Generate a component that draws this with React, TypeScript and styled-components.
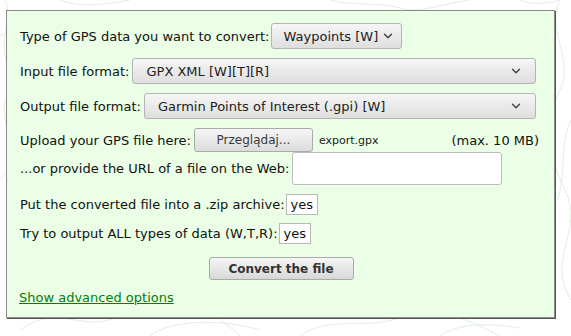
import styled, { createGlobalStyle } from 'styled-components';
import { ChevronDown } from 'lucide-react';

const GlobalStyle = createGlobalStyle`
	html, body {
		margin: 0;
		padding: 0;
		background: #ffffff;
	}
	body {
		font-family: 'DejaVu Sans', 'Liberation Sans', sans-serif;
		font-size: 13px;
		color: #111;
	}
`;

const Page = styled.div`
	position: relative;
	width: 571px;
	height: 336px;
	overflow: hidden;
	padding: 10px 0 0 6px;
	box-sizing: border-box;
`;

const Topo = styled.svg`
	position: absolute;
	left: 0;
	top: 0;
	width: 571px;
	height: 336px;
	pointer-events: none;
`;

const Panel = styled.form`
	position: relative;
	width: 549px;
	height: 308px;
	box-sizing: border-box;
	background: #eaffe6;
	border: 1px solid #8a8a8a;
	box-shadow: 1px 1px 0 #555;
	padding: 12px 14px 0 13px;
	display: flex;
	flex-direction: column;
`;

const Row = styled.div<{ $h: number; $gap: number }>`
	display: flex;
	align-items: center;
	height: ${(p) => p.$h}px;
	margin-bottom: ${(p) => p.$gap}px;
	white-space: nowrap;
`;

const Label = styled.span<{ $tight?: boolean }>`
	margin-right: ${(p) => (p.$tight ? 1 : 3)}px;
`;

const Select = styled.div<{ $grow?: boolean }>`
	display: flex;
	align-items: center;
	justify-content: space-between;
	box-sizing: border-box;
	height: 26px;
	padding: ${(p) => (p.$grow ? '0 12px 0 13px' : '0 6px 0 12px')};
	border: 1px solid #b4b4b4;
	border-radius: 3px;
	background: linear-gradient(#f6f6f6, #dedede);
	color: #222;
	${(p) => (p.$grow ? 'flex: 1; margin-right: 4px;' : 'gap: 3px;')}

	svg {
		color: #444;
	}
`;

const FileButton = styled.div`
	display: flex;
	align-items: center;
	justify-content: center;
	box-sizing: border-box;
	width: 119px;
	height: 24px;
	border: 1px solid #aaa;
	border-radius: 3px;
	background: linear-gradient(#f6f6f6, #dcdcdc);
	color: #3a3a3a;
	font-size: 12px;
	margin-right: 6px;
`;

const FileName = styled.span`
	font-size: 11px;
	color: #222;
	flex: 1;
`;

const MaxSize = styled.span`
	font-size: 13px;
	margin-right: 1px;
`;

const UrlInput = styled.div`
	box-sizing: border-box;
	width: 210px;
	height: 33px;
	background: #fff;
	border: 1px solid #bbb;
	border-radius: 3px;
`;

const YesBox = styled.div`
	box-sizing: border-box;
	height: 21px;
	padding: 0 4px;
	display: flex;
	align-items: center;
	background: #fff;
	border: 1px solid #b8b8b8;
	color: #111;
`;

const ConvertRow = styled.div`
	display: flex;
	justify-content: center;
	margin-bottom: 9px;
`;

const ConvertButton = styled.div`
	display: flex;
	align-items: center;
	justify-content: center;
	box-sizing: border-box;
	width: 145px;
	height: 23px;
	margin-left: 2px;
	border: 1px solid #aaa;
	border-radius: 3px;
	background: linear-gradient(#f6f6f6, #d8d8d8);
	font-weight: bold;
	font-size: 12px;
	color: #333;
`;

const AdvancedLink = styled.a`
	color: #0a7a0a;
	text-decoration: underline;
	line-height: 17px;
	align-self: flex-start;
	margin-left: -1px;
`;

const topoPaths = [
	'M-10 40 C 20 20, 30 60, 10 90 S 30 150, 0 180',
	'M5 0 C 15 20, -5 40, 10 70',
	'M20 330 C 60 300, 90 340, 130 310 S 200 300, 240 336',
	'M150 336 C 170 320, 220 318, 260 330',
	'M300 336 C 330 315, 360 330, 400 318 S 470 320, 500 336',
	'M560 0 C 545 30, 575 60, 560 90 S 545 150, 565 190 S 545 260, 571 300',
	'M571 120 C 560 140, 566 170, 558 200',
	'M60 0 C 80 8, 110 4, 130 0',
	'M330 0 C 350 6, 380 2, 400 8 S 440 4, 470 0',
	'M520 0 C 530 5, 545 4, 560 0',
	'M440 336 C 455 325, 480 322, 520 328',
];

export default function App() {
	return (
		<Page>
			<GlobalStyle />
			<Topo viewBox="0 0 571 336">
				{topoPaths.map((d, i) => (
					<path key={i} d={d} fill="none" stroke="#e3ede3" strokeWidth="1" />
				))}
			</Topo>
			<Panel>
				<Row $h={26} $gap={9}>
					<Label $tight>Type of GPS data you want to convert:</Label>
					<Select>
						Waypoints [W]
						<ChevronDown size={14} strokeWidth={2.5} />
					</Select>
				</Row>
				<Row $h={26} $gap={9}>
					<Label>Input file format:</Label>
					<Select $grow>
						GPX XML [W][T][R]
						<ChevronDown size={14} strokeWidth={2.5} />
					</Select>
				</Row>
				<Row $h={26} $gap={9}>
					<Label>Output file format:</Label>
					<Select $grow>
						Garmin Points of Interest (.gpi) [W]
						<ChevronDown size={14} strokeWidth={2.5} />
					</Select>
				</Row>
				<Row $h={24} $gap={0}>
					<Label>Upload your GPS file here:</Label>
					<FileButton>Przeglądaj...</FileButton>
					<FileName>export.gpx</FileName>
					<MaxSize>(max. 10 MB)</MaxSize>
				</Row>
				<Row $h={33} $gap={9}>
					<Label>...or provide the URL of a file on the Web:</Label>
					<UrlInput />
				</Row>
				<Row $h={21} $gap={8}>
					<Label $tight>Put the converted file into a .zip archive:</Label>
					<YesBox>yes</YesBox>
				</Row>
				<Row $h={21} $gap={13}>
					<Label $tight>Try to output ALL types of data (W,T,R):</Label>
					<YesBox>yes</YesBox>
				</Row>
				<ConvertRow>
					<ConvertButton>Convert the file</ConvertButton>
				</ConvertRow>
				<AdvancedLink href="#">Show advanced options</AdvancedLink>
			</Panel>
		</Page>
	);
}
